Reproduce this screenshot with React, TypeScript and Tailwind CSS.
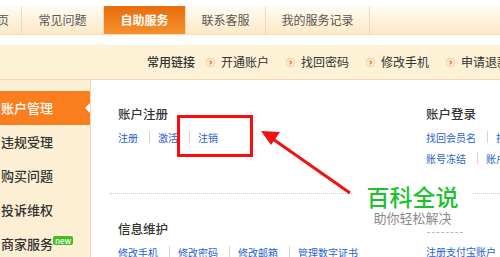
import React from 'react';

const cjk = { fontFamily: '"Noto Sans CJK SC", "Noto Sans", sans-serif' };

function Bullet() {
  return (
    <svg width="9" height="9" viewBox="0 0 10 10" className="shrink-0">
      <circle cx="5" cy="5" r="5" fill="#f9c99a" />
      <circle cx="5" cy="5" r="3.9" fill="#fff1e2" />
      <path d="M4 2.8 L6.1 5 L4 7.2" stroke="#ef7f1c" strokeWidth="1.6" fill="none" />
    </svg>
  );
}

function Sep() {
  return <span className="ml-[11px] mr-[8px] inline-block h-[12px] w-px shrink-0 bg-[#d4d4d4]" />;
}

function LinkRow({ items }: { items: string[] }) {
  return (
    <div className="flex items-center whitespace-nowrap text-[10px] leading-[11px] text-[#2b62cc]">
      {items.map((t, i) => (
        <React.Fragment key={t}>
          {i > 0 && <Sep />}
          <span className="shrink-0">{t}</span>
        </React.Fragment>
      ))}
    </div>
  );
}

const tabs = ['常见问题', '自助服务', '联系客服', '我的服务记录'];
const tabW = ['w-[82px]', 'w-[82px]', 'w-[80px]', 'w-[104px]'];
const sideItems = ['账户管理', '违规受理', '购买问题', '投诉维权', '商家服务'];

export default function App() {
  return (
    <div className="relative h-[257px] w-[500px] overflow-hidden bg-white" style={cjk}>
      {/* top tabs */}
      <div className="h-[6px] bg-white" />
      <div className="flex h-[29px] border-b border-[#f4dcb6] bg-gradient-to-b from-[#fffbf3] to-[#fde9c6] text-[12px] text-[#555]">
        <div className="flex w-[22px] shrink-0 items-center justify-end overflow-hidden border-r border-[#f3dab2] pr-[12px]">
          <span className="whitespace-nowrap">首页</span>
        </div>
        {tabs.map((t, i) => (
          <div
            key={t}
            className={`flex ${tabW[i]} shrink-0 items-center justify-center whitespace-nowrap border-r border-[#f3dab2] ${
              i === 1 ? 'bg-gradient-to-b from-[#e86d0a] to-[#f6902a] font-bold text-white' : ''
            }`}
          >
            {t}
          </div>
        ))}
        <div className="flex-1" />
      </div>
      <div className="h-[10px] bg-white" />

      {/* common links bar */}
      <div className="flex h-[35px] items-center overflow-hidden whitespace-nowrap border-b border-[#f8d3ab] bg-[#fdf1d6] pl-[147px] text-[12px] text-[#333]">
        <span className="mr-[11px] shrink-0 font-medium">常用链接</span>
        {['开通账户', '找回密码', '修改手机', '申请退款'].map((t) => (
          <span key={t} className="mr-[17px] flex shrink-0 items-center gap-[6px]">
            <Bullet />
            <span>{t}</span>
          </span>
        ))}
      </div>

      {/* body */}
      <div className="flex">
        <div className="h-[177px] w-[90px] shrink-0 bg-[#fdefd3] pt-[11px]">
          {sideItems.map((t, i) => (
            <div
              key={t}
              className={`relative flex h-[34px] items-center whitespace-nowrap pl-[1px] text-[13px] font-medium ${
                i === 0 ? 'bg-[#fb7e1e] text-white' : 'text-[#333]'
              }`}
            >
              {t}
              {i === 0 && (
                <span className="absolute right-0 top-[12px] h-0 w-0 border-y-[5px] border-r-[5px] border-y-transparent border-r-white" />
              )}
              {i === 4 && (
                <span className="absolute left-[53px] top-[9px] rounded-[2px] bg-[#3fbf1f] px-[2px] text-[8px] leading-[9px] text-white">
                  new
                </span>
              )}
            </div>
          ))}
        </div>

        <div className="h-[177px] min-w-0 flex-1 overflow-hidden border-l border-[#f6d6b4] bg-white">
          <div className="flex pl-[27px] pt-[26px]">
            <div className="w-[308px] shrink-0">
              <div className="text-[12.5px] font-medium leading-[16px] text-[#333]">账户注册</div>
              <div className="mt-[9px]">
                <LinkRow items={['注册', '激活', '注销']} />
              </div>
            </div>
            <div className="shrink-0">
              <div className="text-[12.5px] font-medium leading-[16px] text-[#333]">账户登录</div>
              <div className="mt-[9px]">
                <LinkRow items={['找回会员名', '找回密码']} />
              </div>
              <div className="mt-[9px]">
                <LinkRow items={['账号冻结', '账户安全']} />
              </div>
            </div>
          </div>

          <div className="ml-[19px] mt-[29px] border-t border-dotted border-[#c8c8c8]" />

          <div className="flex pl-[27px] pt-[27px]">
            <div className="w-[308px] shrink-0">
              <div className="text-[12.5px] font-medium leading-[16px] text-[#333]">信息维护</div>
              <div className="mt-[9px]">
                <LinkRow items={['修改手机', '修改密码', '修改邮箱', '管理数字证书']} />
              </div>
            </div>
            <div className="shrink-0 pt-[25px]">
              <LinkRow items={['注册支付宝账户']} />
            </div>
          </div>
        </div>
      </div>

      {/* watermark */}
      <div className="absolute left-[352px] top-[182px] flex w-[121px] flex-col items-center bg-white">
        <div className="text-[23px] font-medium leading-[28px] text-[#1fbf2f]">百科全说</div>
        <div className="text-[13px] leading-[16px] text-[#8a8a8a]">助你轻松解决</div>
      </div>
      <div className="absolute left-[427px] top-[232px] w-[36px] border-t border-dashed border-[#bbb]" />

      {/* annotation */}
      <div className="absolute left-[177px] top-[115px] h-[42px] w-[76px] border-[3px] border-[#ff0a0a]" />
      <svg className="absolute left-0 top-0" width="500" height="257" viewBox="0 0 500 257">
        <line x1="350" y1="193" x2="270" y2="137" stroke="#f01212" strokeWidth="3" />
        <polygon points="261,131 280,132 271,145" fill="#f01212" />
      </svg>
    </div>
  );
}
